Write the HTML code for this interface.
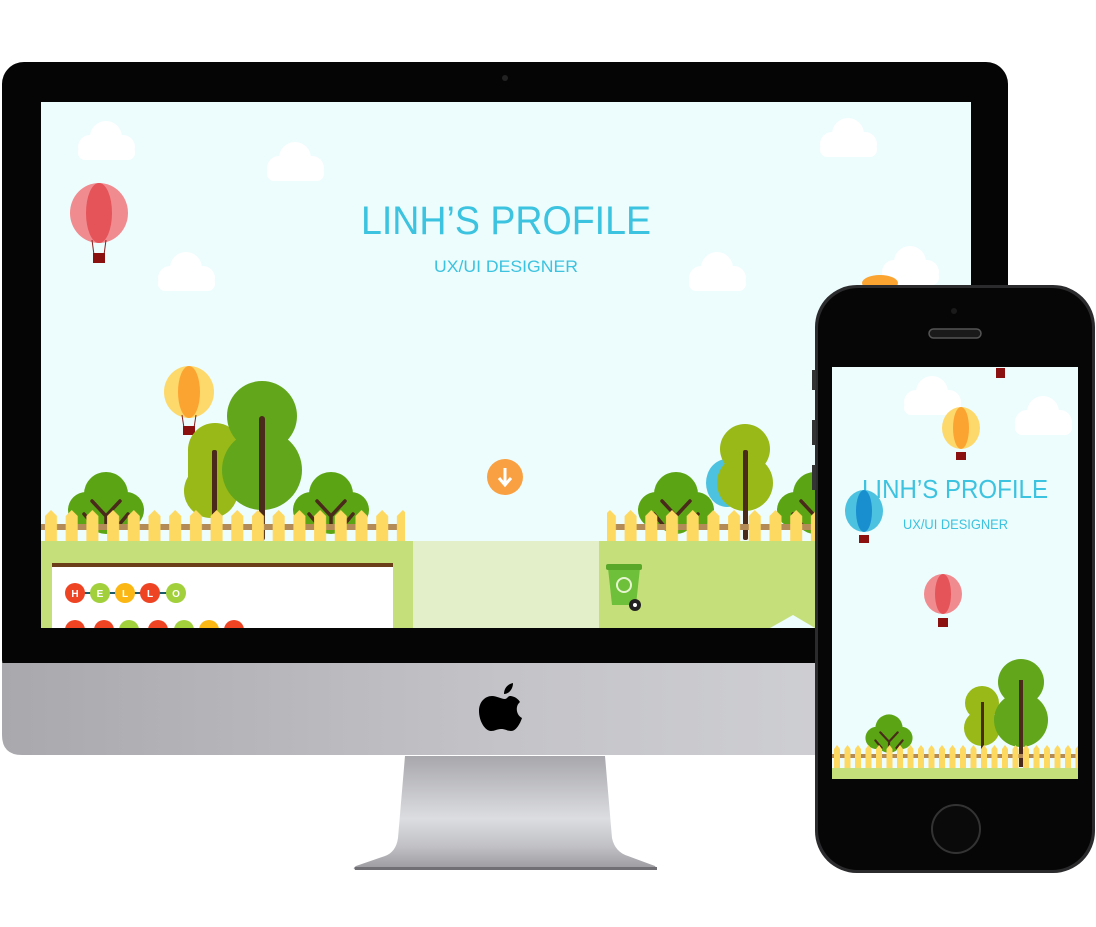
<!DOCTYPE html>
<html><head><meta charset="utf-8"><style>
html,body{margin:0;padding:0;background:#fff;width:1096px;height:927px;overflow:hidden}
svg{display:block}
</style></head><body>
<svg width="1096" height="927" viewBox="0 0 1096 927" xmlns="http://www.w3.org/2000/svg">
<defs>
<linearGradient id="chin" x1="0" x2="1"><stop offset="0" stop-color="#a9a9ad"/><stop offset="0.5" stop-color="#c4c4c8"/><stop offset="1" stop-color="#d4d5d9"/></linearGradient>
<linearGradient id="stand" x1="0" y1="0" x2="0" y2="1"><stop offset="0" stop-color="#a8a8ac"/><stop offset="0.55" stop-color="#dcdde0"/><stop offset="0.8" stop-color="#c0c0c4"/><stop offset="1" stop-color="#9a9a9e"/></linearGradient>
<pattern id="fence" x="41" y="510" width="20.7" height="32" patternUnits="userSpaceOnUse">
<rect x="0" y="14" width="20.7" height="6" fill="#b38b58"/>
<path d="M4 6 L10 0 L16 6 L16 32 L4 32Z" fill="#fdd961"/>
</pattern>
<pattern id="pfence" x="832" y="745" width="10.5" height="23" patternUnits="userSpaceOnUse">
<rect x="0" y="9" width="10.5" height="4" fill="#b38b58"/>
<path d="M2 4 L5 0 L8 4 L8 23 L2 23Z" fill="#fdd961"/>
</pattern>
<g id="cloud"><circle cx="0" cy="0" r="16" fill="#fff"/><circle cx="-16" cy="10" r="12" fill="#fff"/><circle cx="17" cy="10" r="12" fill="#fff"/><rect x="-28" y="8" width="57" height="15" rx="7" fill="#fff"/></g>
<g id="bush"><circle cx="0" cy="-8" r="22" fill="#5ba514"/><circle cx="-20" cy="8" r="18" fill="#5ba514"/><circle cx="20" cy="8" r="18" fill="#5ba514"/><circle cx="0" cy="12" r="20" fill="#5ba514"/><path d="M-14 -1 L0 14 L14 -1 M0 14 L0 25 M-22 12 L-12 24 M22 12 L12 24" stroke="#4a2a1a" stroke-width="3.5" fill="none" stroke-linecap="round"/></g>
</defs>

<rect x="2" y="62" width="1006" height="620" rx="22" fill="#050505"/>
<circle cx="505" cy="78" r="3" fill="#222"/>
<path d="M2 663 H1008 V735 Q1008 755 988 755 H22 Q2 755 2 735Z" fill="url(#chin)"/>
<path d="M405 756 H605 L612 838 Q615 852 628 856 L655 866 Q658 870 650 870 H360 Q350 870 356 866 L385 856 Q396 852 398 838Z" fill="url(#stand)"/>
<rect x="355" y="867" width="302" height="3" fill="#707074"/>
<path d="M505 699 C501 699 497 696 492 696 C485 696 479 702 479 711 C479 721 485 731 491 731 C495 731 497 729 501 729 C506 729 507 731 511 731 C516 731 520 724 522 718 C516 715 515 706 520 702 C517 697 512 696 510 696 C508 696 507 699 505 699Z M504 694 C504 688 508 684 513 683 C513 689 509 694 504 694Z" fill="#000"/>

<svg x="41" y="102" width="930" height="526" viewBox="41 102 930 526">
<rect x="41" y="102" width="930" height="526" fill="#edfcfd"/>
<use href="#cloud" x="106" y="137"/>
<use href="#cloud" x="295" y="158"/>
<use href="#cloud" x="186" y="268"/>
<use href="#cloud" x="848" y="134"/>
<use href="#cloud" x="717" y="268"/>
<use href="#cloud" x="910" y="262"/>
<g><ellipse cx="99" cy="213" rx="29" ry="30" fill="#f08b8f"/><ellipse cx="99" cy="213" rx="13" ry="30" fill="#e45459"/><path d="M92 240 L94 255 M106 240 L104 255" stroke="#8a2020"/><rect x="93" y="253" width="12" height="10" fill="#8b1111"/></g>
<g><ellipse cx="189" cy="392" rx="25" ry="26" fill="#fdd96c"/><ellipse cx="189" cy="392" rx="11" ry="26" fill="#fba432"/><path d="M182 415 L184 428 M196 415 L194 428" stroke="#8a2020"/><rect x="183" y="426" width="12" height="9" fill="#8b1111"/></g>
<ellipse cx="880" cy="283" rx="18" ry="8" fill="#fba432"/>
<g><ellipse cx="727" cy="483" rx="21" ry="24" fill="#4cc2e0"/></g>
<text x="361" y="234" textLength="290" lengthAdjust="spacingAndGlyphs" font-family="Liberation Sans, sans-serif" font-size="40" fill="#3cc3df">LINH’S PROFILE</text>
<text x="434" y="272" textLength="144" lengthAdjust="spacingAndGlyphs" font-family="Liberation Sans, sans-serif" font-size="17" fill="#3cc3df">UX/UI DESIGNER</text>
<circle cx="505" cy="477" r="18" fill="#f9a142"/>
<path d="M505 468 V483 M499 478 L505 485 L511 478" stroke="#fff" stroke-width="3" fill="none"/>
<use href="#bush" x="106" y="502"/>
<use href="#bush" x="331" y="502"/>
<g fill="#98b918"><circle cx="215" cy="450" r="27"/><circle cx="211" cy="491" r="27"/><rect x="188" y="450" width="52" height="40"/></g>
<rect x="212" y="450" width="5" height="80" rx="2" fill="#4a2a1a"/>
<g fill="#62a61c"><circle cx="262" cy="416" r="35"/><circle cx="262" cy="470" r="40"/></g>
<rect x="259" y="416" width="6" height="125" rx="3" fill="#4a2a1a"/>
<use href="#bush" x="676" y="502"/>
<use href="#bush" x="815" y="502"/>
<g fill="#98b918"><circle cx="745" cy="449" r="25"/><circle cx="745" cy="483" r="28"/></g>
<rect x="743" y="450" width="5" height="90" rx="2" fill="#4a2a1a"/>
<rect x="41" y="510" width="364" height="32" fill="url(#fence)"/>
<rect x="607" y="510" width="210" height="32" fill="url(#fence)"/>
<rect x="41" y="541" width="372" height="87" fill="#c5e07a"/>
<rect x="413" y="541" width="186" height="87" fill="#e2efc9"/>
<rect x="599" y="541" width="372" height="87" fill="#c5e07a"/>
<rect x="52" y="563" width="341" height="70" fill="#fff"/>
<rect x="52" y="563" width="341" height="4" fill="#6b3e1a"/>
<g font-family="Liberation Sans, sans-serif" font-size="10" fill="#fff" text-anchor="middle" font-weight="bold">
<line x1="75" y1="593" x2="176" y2="593" stroke="#1b5a6a" stroke-width="2"/>
<circle cx="75" cy="593" r="10" fill="#ef4424"/><text x="75" y="597">H</text>
<circle cx="100" cy="593" r="10" fill="#a2d03c"/><text x="100" y="597">E</text>
<circle cx="125" cy="593" r="10" fill="#fbb714"/><text x="125" y="597">L</text>
<circle cx="150" cy="593" r="10" fill="#ef4424"/><text x="150" y="597">L</text>
<circle cx="176" cy="593" r="10" fill="#a2d03c"/><text x="176" y="597">O</text>
<circle cx="75" cy="630" r="10" fill="#ef4424"/><circle cx="104" cy="630" r="10" fill="#ef4424"/><circle cx="129" cy="630" r="10" fill="#a2d03c"/><circle cx="158" cy="630" r="10" fill="#ef4424"/><circle cx="184" cy="630" r="10" fill="#a2d03c"/><circle cx="209" cy="630" r="10" fill="#fbb714"/><circle cx="234" cy="630" r="10" fill="#ef4424"/>
</g>
<path d="M608 568 H640 L636 605 H612Z" fill="#6ebf3a"/>
<rect x="606" y="564" width="36" height="6" rx="2" fill="#5aa82a"/>
<circle cx="624" cy="585" r="7" fill="none" stroke="#e6f5d0" stroke-width="2"/>
<circle cx="635" cy="605" r="6" fill="#222"/><circle cx="635" cy="605" r="2" fill="#fff"/>
<path d="M770 628 L793 615 L815 628Z" fill="#edfcfd"/>
</svg>

<rect x="815" y="285" width="280" height="588" rx="42" fill="#2b2b2d"/>
<rect x="818" y="288" width="274" height="582" rx="40" fill="#060606"/>
<rect x="812" y="370" width="4" height="20" fill="#333"/>
<rect x="812" y="420" width="4" height="25" fill="#333"/>
<rect x="812" y="465" width="4" height="25" fill="#333"/>
<rect x="929" y="329" width="52" height="9" rx="4.5" fill="#1a1a1a" stroke="#555" stroke-width="1.5"/>
<circle cx="954" cy="311" r="3" fill="#1a1a1a"/>
<circle cx="956" cy="829" r="24" fill="#0a0a0a" stroke="#333" stroke-width="2"/>
<rect x="832" y="367" width="246" height="412" fill="#edfcfd"/>
<use href="#cloud" x="932" y="392"/>
<use href="#cloud" x="1043" y="412"/>
<rect x="996" y="368" width="9" height="10" fill="#8b1111"/>
<g><ellipse cx="961" cy="428" rx="19" ry="21" fill="#fdd96c"/><ellipse cx="961" cy="428" rx="8" ry="21" fill="#fba432"/><rect x="956" y="452" width="10" height="8" fill="#8b1111"/></g>
<text x="862" y="498" textLength="186" lengthAdjust="spacingAndGlyphs" font-family="Liberation Sans, sans-serif" font-size="26" fill="#3cc3df">LINH’S PROFILE</text>
<text x="903" y="529" textLength="105" lengthAdjust="spacingAndGlyphs" font-family="Liberation Sans, sans-serif" font-size="14" fill="#3cc3df">UX/UI DESIGNER</text>
<g><ellipse cx="864" cy="511" rx="19" ry="21" fill="#4cc2e0"/><ellipse cx="864" cy="511" rx="8" ry="21" fill="#1a8fd0"/><rect x="859" y="535" width="10" height="8" fill="#8b1111"/></g>
<g><ellipse cx="943" cy="594" rx="19" ry="20" fill="#f08b8f"/><ellipse cx="943" cy="594" rx="8" ry="20" fill="#e45459"/><rect x="938" y="618" width="10" height="9" fill="#8b1111"/></g>
<g transform="translate(889 733) scale(0.62)"><use href="#bush"/></g>
<g fill="#98b918"><circle cx="982" cy="703" r="17"/><circle cx="982" cy="728" r="18"/></g>
<rect x="981" y="702" width="3" height="65" fill="#4a2a1a"/>
<g fill="#62a61c"><circle cx="1021" cy="682" r="23"/><circle cx="1021" cy="720" r="27"/></g>
<rect x="1019" y="680" width="4" height="87" fill="#4a2a1a"/>
<rect x="832" y="745" width="246" height="23" fill="url(#pfence)"/>
<rect x="832" y="768" width="246" height="11" fill="#c5e07a"/>
</svg>
</body></html>
